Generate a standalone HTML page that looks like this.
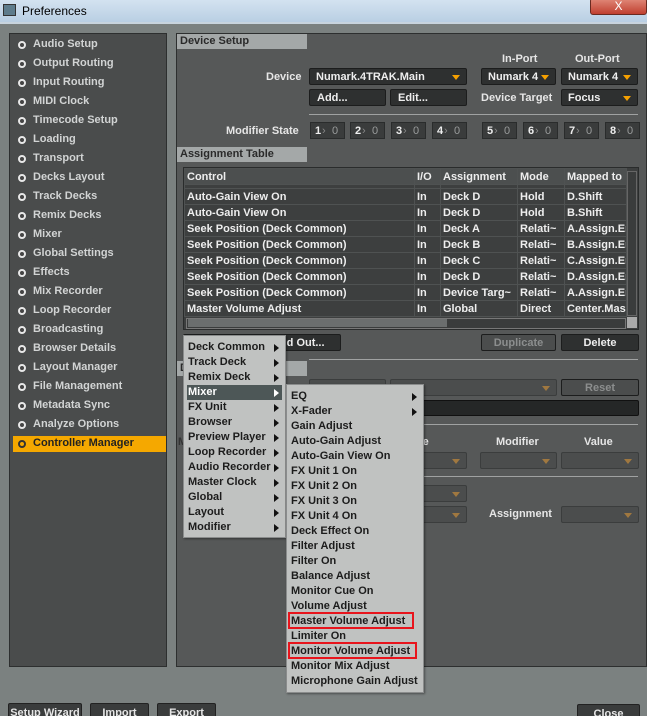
<!DOCTYPE html>
<html><head><meta charset="utf-8"><style>
*{margin:0;padding:0;box-sizing:border-box}
html,body{width:647px;height:716px;overflow:hidden}
body{background:#7b8180;font-family:"Liberation Sans",sans-serif;font-size:11px;font-weight:bold;position:relative;color:#e6e6e6}
.a{position:absolute;white-space:nowrap}
.title{left:0;top:0;width:647px;height:22px;background:linear-gradient(#d3e2f0,#b9cfe3);color:#000;font-weight:normal;font-size:12px}
.panel{border:1px solid #2d2f2f}
.hdr{background:#a4a8a8;color:#2a2a2a;height:15px;padding:1px 0 0 3px}
.dd{background:#2e3030;border:1px solid #1c1d1d;border-radius:2px;color:#eee;height:17px;padding:2px 0 0 6px}
.dd::after{content:"";position:absolute;right:6px;top:6px;border-left:4px solid transparent;border-right:4px solid transparent;border-top:5px solid #f5a000}
.dd.dim{background:#4b4d4d;border-color:#3b3d3d}
.dd.dim::after{border-top-color:#a07840}
.btn{background:#2e3030;border:1px solid #1c1d1d;border-radius:2px;height:17px;padding:2px 0 0 7px;color:#eee;overflow:hidden}
.btn.dis{background:#4b4d4d;color:#8c8e8e;text-align:center;padding-left:0}
.ms{height:17px;border:1px solid #2a2c2c;background:#3a3c3c;width:35px;top:122px}
.ms b{position:absolute;left:4px;top:2px;color:#eee}
.ms i{position:absolute;left:21px;top:2px;color:#9a9c9c;font-style:normal;font-weight:normal}
.ms s{position:absolute;left:11px;top:2px;color:#888;text-decoration:none;font-weight:normal}
.side div{position:absolute;left:3px;width:153px;height:16px;padding:1px 0 0 20px;color:#d2d4d4}
.side div::before{content:"";position:absolute;left:5px;top:4px;width:4px;height:4px;border:2px solid #e8e8e8;border-radius:50%;background:#444}
.side div.on{background:#f5a800;color:#222}
.side div.on::before{border-color:#333;background:#f5a800}
table{border-collapse:collapse;position:absolute;left:184px;top:168px;width:442px;table-layout:fixed}
td{height:16px;line-height:14px;border:1px solid #4f5252;padding:0 0 0 2px;white-space:nowrap;overflow:hidden;color:#eee;background:#3d3f3f}
tr.h td{background:#4c4f4f}
tr.p td{height:4px;line-height:4px;font-size:0}
.menu{background:#c0c2c1;border:1px solid #8a8c8c;color:#1c1c1c;box-shadow:1px 1px 2px rgba(0,0,0,.4)}
.menu div{position:absolute;left:3px;height:15px;padding:1px 0 0 1px;width:calc(100% - 6px)}
.menu div.ar::after{content:"";position:absolute;right:3px;top:4px;border-top:4px solid transparent;border-bottom:4px solid transparent;border-left:5px solid #111}
.menu div.sel{background:#4d5757;color:#fff}
.menu div.sel::after{border-left-color:#fff}
.red{border:2px solid #e8141c}
.bb{background:#3a3c3c;border:1px solid #222;border-radius:2px;color:#e6e6e6;height:20px;text-align:center;padding-top:3px}
.sep{height:1px;background:#a0a2a2}
</style></head><body>
<div class="a title"><span class="a" style="left:3px;top:4px;width:13px;height:12px;background:#5e7c8c;border:1px solid #333"></span><span class="a" style="left:22px;top:4px">Preferences</span>
<span class="a" style="left:590px;top:-2px;width:57px;height:17px;background:linear-gradient(#e08878,#c04030);border:1px solid #6a2a20;border-radius:3px;color:#fff;text-align:center;font-size:12px">X</span></div>
<div class="a" style="left:0;top:22px;width:647px;height:2px;background:#c8d4de"></div>

<div class="a panel side" style="left:9px;top:33px;width:158px;height:634px;background:#4a4c4c">
<div style="top:3px">Audio Setup</div><div style="top:22px">Output Routing</div><div style="top:41px">Input Routing</div><div style="top:60px">MIDI Clock</div><div style="top:79px">Timecode Setup</div><div style="top:98px">Loading</div><div style="top:117px">Transport</div><div style="top:136px">Decks Layout</div><div style="top:155px">Track Decks</div><div style="top:174px">Remix Decks</div><div style="top:193px">Mixer</div><div style="top:212px">Global Settings</div><div style="top:231px">Effects</div><div style="top:250px">Mix Recorder</div><div style="top:269px">Loop Recorder</div><div style="top:288px">Broadcasting</div><div style="top:307px">Browser Details</div><div style="top:326px">Layout Manager</div><div style="top:345px">File Management</div><div style="top:364px">Metadata Sync</div><div style="top:383px">Analyze Options</div><div class="on" style="top:402px">Controller Manager</div>
</div>

<div class="a panel" style="left:176px;top:33px;width:471px;height:634px;background:#565858"></div>
<div class="a hdr" style="left:177px;top:34px;width:130px">Device Setup</div>
<div class="a" style="left:502px;top:53px">In-Port</div><div class="a" style="left:575px;top:53px">Out-Port</div>
<div class="a" style="left:266px;top:71px">Device</div>
<div class="a dd" style="left:309px;top:68px;width:158px">Numark.4TRAK.Main</div>
<div class="a dd" style="left:481px;top:68px;width:75px">Numark 4</div>
<div class="a dd" style="left:561px;top:68px;width:77px">Numark 4</div>
<div class="a btn" style="left:309px;top:89px;width:77px">Add...</div>
<div class="a btn" style="left:390px;top:89px;width:77px">Edit...</div>
<div class="a" style="left:481px;top:92px">Device Target</div>
<div class="a dd" style="left:561px;top:89px;width:77px">Focus</div>
<div class="a sep" style="left:309px;top:114px;width:329px"></div>
<div class="a" style="left:226px;top:125px">Modifier State</div>
<div class="a ms" style="left:310px"><b>1</b><s>›</s><i>0</i></div>
<div class="a ms" style="left:350px"><b>2</b><s>›</s><i>0</i></div>
<div class="a ms" style="left:391px"><b>3</b><s>›</s><i>0</i></div>
<div class="a ms" style="left:432px"><b>4</b><s>›</s><i>0</i></div>
<div class="a ms" style="left:482px"><b>5</b><s>›</s><i>0</i></div>
<div class="a ms" style="left:523px"><b>6</b><s>›</s><i>0</i></div>
<div class="a ms" style="left:564px"><b>7</b><s>›</s><i>0</i></div>
<div class="a ms" style="left:605px"><b>8</b><s>›</s><i>0</i></div>
<div class="a hdr" style="left:177px;top:147px;width:130px">Assignment Table</div>

<div class="a" style="left:183px;top:167px;width:456px;height:163px;background:#3d3f3f;border:1px solid #2a2c2c"></div>
<table>
<colgroup><col style="width:230px"><col style="width:26px"><col style="width:77px"><col style="width:47px"><col style="width:62px"></colgroup>
<tr class="h"><td>Control</td><td>I/O</td><td>Assignment</td><td>Mode</td><td>Mapped to</td></tr>
<tr class="p"><td></td><td></td><td></td><td></td><td></td></tr>
<tr><td>Auto-Gain View On</td><td>In</td><td>Deck D</td><td>Hold</td><td>D.Shift</td></tr>
<tr><td>Auto-Gain View On</td><td>In</td><td>Deck D</td><td>Hold</td><td>B.Shift</td></tr>
<tr><td>Seek Position (Deck Common)</td><td>In</td><td>Deck A</td><td>Relati~</td><td>A.Assign.En</td></tr>
<tr><td>Seek Position (Deck Common)</td><td>In</td><td>Deck B</td><td>Relati~</td><td>B.Assign.En</td></tr>
<tr><td>Seek Position (Deck Common)</td><td>In</td><td>Deck C</td><td>Relati~</td><td>C.Assign.En</td></tr>
<tr><td>Seek Position (Deck Common)</td><td>In</td><td>Deck D</td><td>Relati~</td><td>D.Assign.En</td></tr>
<tr><td>Seek Position (Deck Common)</td><td>In</td><td>Device Targ~</td><td>Relati~</td><td>A.Assign.En</td></tr>
<tr><td>Master Volume Adjust</td><td>In</td><td>Global</td><td>Direct</td><td>Center.Mas</td></tr>
</table>
<div class="a" style="left:627px;top:171px;width:10px;height:145px;background:#3a3c3c;border:1px solid #666"></div>
<div class="a" style="left:186px;top:318px;width:440px;height:11px;background:#3a3c3c;border:1px solid #777"></div>
<div class="a" style="left:188px;top:319px;width:259px;height:8px;background:#6b6e6e"></div>
<div class="a" style="left:627px;top:317px;width:10px;height:11px;background:#aaa"></div>

<div class="a btn" style="left:183px;top:334px;width:158px;padding-left:88px">Add Out...</div>
<div class="a btn dis" style="left:481px;top:334px;width:75px">Duplicate</div>
<div class="a btn" style="left:561px;top:334px;width:78px;text-align:center;padding-left:0">Delete</div>
<div class="a sep" style="left:309px;top:359px;width:329px"></div>
<div class="a hdr" style="left:177px;top:361px;width:130px">D</div>
<div class="a dd dim" style="left:309px;top:379px;width:77px"></div>
<div class="a dd dim" style="left:390px;top:379px;width:167px"></div>
<div class="a btn dis" style="left:561px;top:379px;width:78px">Reset</div>
<div class="a" style="left:420px;top:400px;width:219px;height:16px;background:#252727;border:1px solid #111;border-radius:2px"></div>
<div class="a sep" style="left:309px;top:424px;width:329px"></div>
<div class="a" style="left:178px;top:436px;color:#333">M</div>
<div class="a" style="left:400px;top:436px">Value</div><div class="a" style="left:496px;top:436px">Modifier</div><div class="a" style="left:584px;top:436px">Value</div>
<div class="a dd dim" style="left:400px;top:452px;width:67px"></div>
<div class="a dd dim" style="left:480px;top:452px;width:77px"></div>
<div class="a dd dim" style="left:561px;top:452px;width:78px"></div>
<div class="a sep" style="left:309px;top:476px;width:329px"></div>
<div class="a dd dim" style="left:400px;top:485px;width:67px"></div>
<div class="a dd dim" style="left:400px;top:506px;width:67px"></div>
<div class="a" style="left:489px;top:508px">Assignment</div>
<div class="a dd dim" style="left:561px;top:506px;width:78px"></div>

<div class="a menu" style="left:183px;top:335px;width:103px;height:203px">
<div class="ar" style="top:4px">Deck Common</div><div class="ar" style="top:19px">Track Deck</div><div class="ar" style="top:34px">Remix Deck</div><div class="ar sel" style="top:49px">Mixer</div><div class="ar" style="top:64px">FX Unit</div><div class="ar" style="top:79px">Browser</div><div class="ar" style="top:94px">Preview Player</div><div class="ar" style="top:109px">Loop Recorder</div><div class="ar" style="top:124px">Audio Recorder</div><div class="ar" style="top:139px">Master Clock</div><div class="ar" style="top:154px">Global</div><div class="ar" style="top:169px">Layout</div><div class="ar" style="top:184px">Modifier</div>
</div>
<div class="a menu" style="left:286px;top:384px;width:138px;height:309px">
<div class="ar" style="top:4px">EQ</div><div class="ar" style="top:19px">X-Fader</div><div style="top:34px">Gain Adjust</div><div style="top:49px">Auto-Gain Adjust</div><div style="top:64px">Auto-Gain View On</div><div style="top:79px">FX Unit 1 On</div><div style="top:94px">FX Unit 2 On</div><div style="top:109px">FX Unit 3 On</div><div style="top:124px">FX Unit 4 On</div><div style="top:139px">Deck Effect On</div><div style="top:154px">Filter Adjust</div><div style="top:169px">Filter On</div><div style="top:184px">Balance Adjust</div><div style="top:199px">Monitor Cue On</div><div style="top:214px">Volume Adjust</div><div style="top:229px">Master Volume Adjust</div><div style="top:244px">Limiter On</div><div style="top:259px">Monitor Volume Adjust</div><div style="top:274px">Monitor Mix Adjust</div><div style="top:289px">Microphone Gain Adjust</div>
</div>
<div class="a red" style="left:288px;top:612px;width:126px;height:17px"></div>
<div class="a red" style="left:288px;top:642px;width:129px;height:17px"></div>

<div class="a bb" style="left:8px;top:703px;width:74px">Setup Wizard</div>
<div class="a bb" style="left:90px;top:703px;width:59px">Import</div>
<div class="a bb" style="left:157px;top:703px;width:59px">Export</div>
<div class="a bb" style="left:577px;top:704px;width:63px">Close</div>
</body></html>
